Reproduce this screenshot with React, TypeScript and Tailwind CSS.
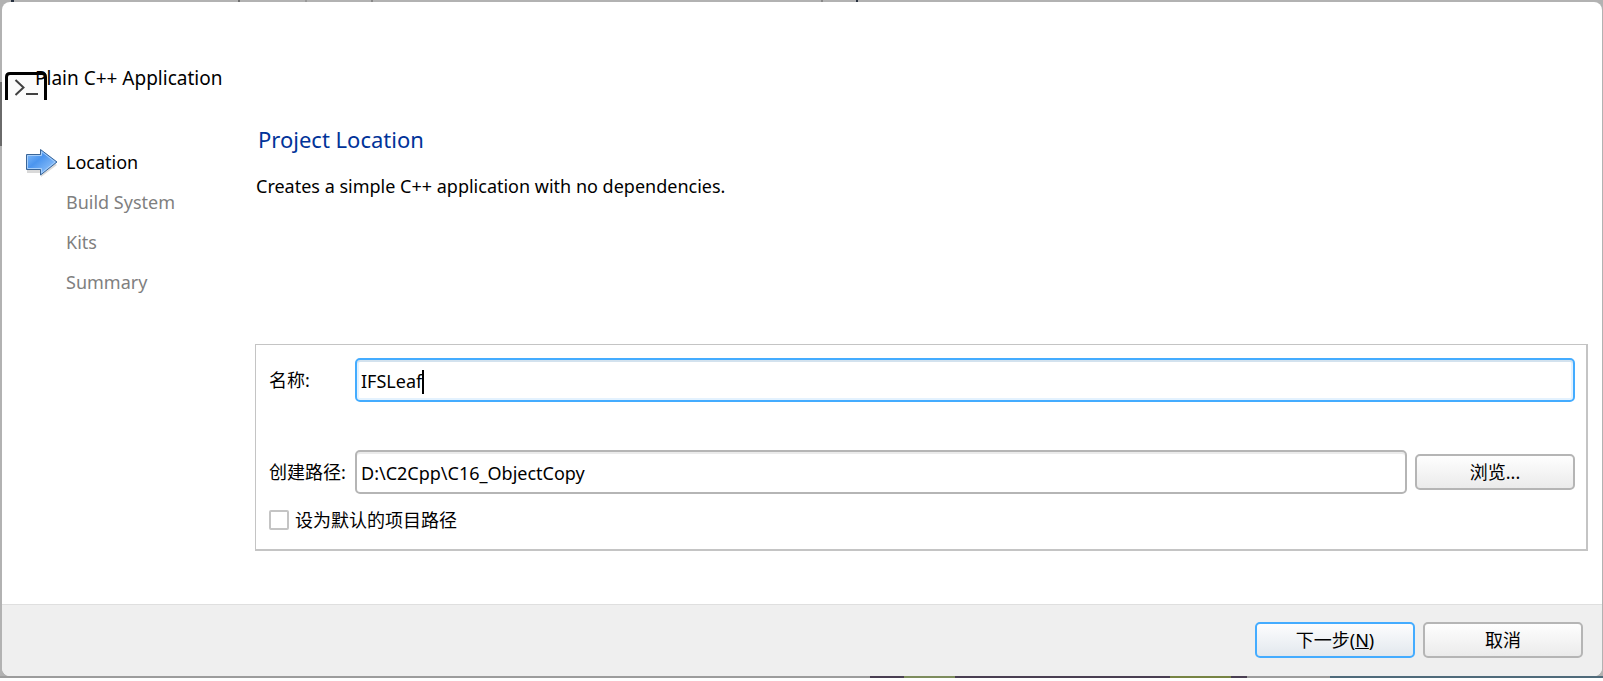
import type { ReactNode } from 'react'

const steps = ['Location', 'Build System', 'Kits', 'Summary']

function ConsoleIcon() {
  return (
    <svg className="block h-7 w-[42px]" viewBox="0 0 42 28" fill="none" aria-hidden="true">
      <path d="M1.5 28V5Q1.5 1.5 5 1.5H37Q40.5 1.5 40.5 5V28" fill="#fbfbfb" stroke="#000" strokeWidth="3" />
      <path d="M10.5 8L18.5 15.5L10.5 23" stroke="#404040" strokeWidth="2" />
      <path d="M21 22H33" stroke="#404040" strokeWidth="2" />
    </svg>
  )
}

function StepArrow() {
  return (
    <svg className="block h-8 w-8" viewBox="0 0 32 32" aria-hidden="true">
      <defs>
        <linearGradient id="arrow" x1="0" y1="0" x2="1" y2="1">
          <stop offset="0" stopColor="#8fc3fb" />
          <stop offset="0.4" stopColor="#4b95ef" />
          <stop offset="1" stopColor="#a9d2fd" />
        </linearGradient>
      </defs>
      <path d="M1 11H15V6L31 19L15 31V27H1Z" fill="#000" opacity="0.15" />
      <path d="M0.5 8.5H14.5V3.5L31 16L14.5 29V23.5H0.5Z" fill="url(#arrow)" stroke="#3a6597" />
      <path d="M1.5 9.5H15.5V5.5L29 16L15.5 27V22.5H1.5Z" fill="none" stroke="#a8cffa" />
    </svg>
  )
}

// slivers of the desktop that show above the window
function DesktopTopEdge() {
  return (
    <div className="flex h-[2px]" aria-hidden="true">
      <div className="ml-[11px] w-[3px] bg-[#27303f]" />
      <div className="ml-[14%] w-[2px] bg-[#707070]" />
      <div className="ml-[4%] w-[2px] bg-[#999999]" />
      <div className="ml-[4%] w-[2px] bg-[#888888]" />
      <div className="ml-[28%] w-[2px] bg-[#888888]" />
      <div className="ml-[2%] w-[2px] bg-[#27303f]" />
    </div>
  )
}

// and below it
function DesktopBottomEdge() {
  return (
    <div className="flex h-[2px]" aria-hidden="true">
      <div className="w-[54.3%] bg-[#9c9c9c]" />
      <div className="w-[2.1%] bg-[#4a3f52]" />
      <div className="w-[3.2%] bg-[#7d8c5d]" />
      <div className="w-[13.4%] bg-[#4a3f52]" />
      <div className="w-[3.8%] bg-[#778444]" />
      <div className="w-[1%] bg-[#4a3f52]" />
      <div className="w-[5.2%] bg-[#9c9c9c]" />
      <div className="flex-1 bg-[#4f6a7a]" />
    </div>
  )
}

type DialogButtonProps = {
  children: ReactNode
  primary?: boolean
}

function DialogButton({ children, primary }: DialogButtonProps) {
  const look = primary
    ? 'border-[#44acff] from-[#fdfdfe] to-[#e2e8ee]'
    : 'border-[#b5b5b5] from-[#fefefe] to-[#ebebeb]'
  return (
    <button
      type="button"
      className={`h-9 w-40 shrink-0 rounded-[5px] border-2 bg-linear-to-b text-[18px] leading-6 ${look}`}
    >
      {children}
    </button>
  )
}

export default function App() {
  return (
    <div className="min-h-screen bg-white font-['Noto_Sans','Noto_Sans_CJK_SC',sans-serif] text-[18px] leading-6 text-black">
      <div className="bg-[#b2b2b2]">
        <DesktopTopEdge />
        <div className="flex">
          {/* left sliver, darker beside the header */}
          <div className="flex w-[2px] shrink-0 flex-col" aria-hidden="true">
            <div className="mt-20 h-16 bg-[#6a6a6a]" />
          </div>
          <div className="mr-px flex min-w-0 flex-1 flex-col overflow-hidden rounded-lg bg-white">
            <header className="flex px-[3px] pt-[70px]">
              <ConsoleIcon />
              <h1 className="-mt-1.5 -ml-3 text-[19px]">Plain C++ Application</h1>
            </header>

            <div className="flex pt-5 pb-[53px] pr-[14px]">
              <nav className="w-[253px] shrink-0 pt-[22px] pl-6">
                <ol>
                  {steps.map((step, index) => (
                    <li key={step} className="flex h-10 items-center gap-2">
                      <span className="w-8">{index === 0 && <StepArrow />}</span>
                      <span className={index === 0 ? 'text-black' : 'text-[#7f7f7f]'}>{step}</span>
                    </li>
                  ))}
                </ol>
              </nav>

              <main className="min-w-0 flex-1">
                <h2 className="pt-[3px] pl-[3px] text-[22px] leading-8 text-[#003399]">Project Location</h2>
                <p className="pt-[19px] pl-px">Creates a simple C++ application with no dependencies.</p>

                <form className="mt-[146px] border border-r-2 border-b-2 border-[#c4c4c4] pt-[13px] pr-[11px] pb-[17px] pl-[13px]">
                  <div className="flex items-center">
                    <label htmlFor="name" className="w-[86px] shrink-0">名称:</label>
                    <div className="relative min-w-0 flex-1">
                      <input
                        id="name"
                        defaultValue="IFSLeaf"
                        className="block h-11 w-full rounded-[5px] border-2 border-[#44acff] px-1 pt-[2px] shadow-[inset_0_2px_0_#d3e2ee,inset_0_0_0_2px_#e4f2fe] outline-none"
                      />
                      {/* text caret */}
                      <span className="absolute top-3 left-[67px] h-6 w-[2px] bg-black" />
                    </div>
                  </div>
                  <div className="mt-12 flex items-center">
                    <label htmlFor="path" className="w-[86px] shrink-0">创建路径:</label>
                    <input
                      id="path"
                      defaultValue="D:\C2Cpp\C16_ObjectCopy"
                      className="mr-2 h-11 min-w-0 flex-1 rounded-[5px] border-2 border-[#b5b5b5] px-1 pt-[2px] shadow-[inset_0_2px_0_#ebebeb]"
                    />
                    <DialogButton>浏览...</DialogButton>
                  </div>
                  <label className="mt-[14px] flex items-center gap-[6px]">
                    <input type="checkbox" className="size-5 appearance-none rounded-xs border-2 border-[#c4c4c4] bg-white" />
                    设为默认的项目路径
                  </label>
                </form>
              </main>
            </div>

            <footer className="flex justify-end gap-2 border-t border-[#dfdfdf] bg-[#efefef] pt-[17px] pr-[19px] pb-[18px]">
              <DialogButton primary>
                下一步(<u>N</u>)
              </DialogButton>
              <DialogButton>取消</DialogButton>
            </footer>
          </div>
        </div>
        <DesktopBottomEdge />
      </div>
    </div>
  )
}
